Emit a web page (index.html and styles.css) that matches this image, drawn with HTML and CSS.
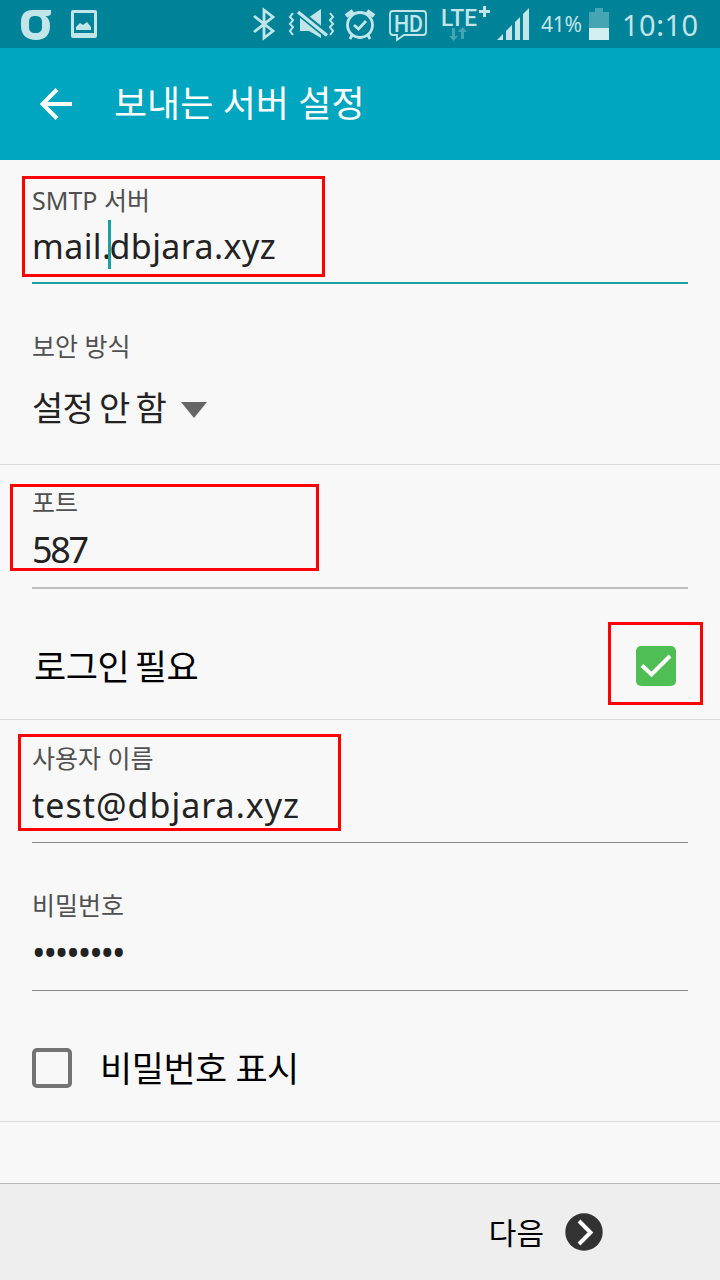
FILE: index.html
```html
<!doctype html>
<html lang="ko">
<head>
    <meta charset="UTF-8">
    <meta name="viewport" content="width=device-width, initial-scale=1.0">
    <title>보내는 서버 설정</title>
    <link rel="stylesheet" href="styles.css">
</head>
<body>
<div class="screen">
    <div class="status-bar">
        <div class="status-left">
            <svg width="32" height="32" viewBox="0 0 32 32">
                <path fill-rule="evenodd" d="M13 2H31V5Q31 8 27 8H25.500Q30 11 30 18C30 27 25 32 16 32S1 27 1 18V14C1 6 5 2 13 2ZM15 8C11 8 9 10 9 14V19C9 23 11 25 15.500 25S22 23 22 19V14C22 10 20 8 15 8Z"/>
            </svg>
            <svg class="picture" width="28" height="30" viewBox="0 0 28 30">
                <path fill-rule="evenodd" d="M3 1H25Q27 1 27 3V27Q27 29 25 29H3Q1 29 1 27V3Q1 1 3 1ZM4 4V24H24V4Z"/>
                <path d="M6 21V18L10 14L13 16L17 13L21 18V21Z"/>
            </svg>
        </div>
        <div class="status-right">
            <svg class="line" width="24" height="34" viewBox="0 0 24 34">
                <path stroke-width="2.800" d="M2 9L21 24L12 31V3L21 10L2 25"/>
            </svg>
            <svg class="mute" width="48" height="34" viewBox="0 0 48 34">
                <path class="thin" d="M5 6L2 10L5 13L2 17L5 20L2 24L5 28M42 6L45 10L42 13L45 17L42 20L45 24L42 28"/>
                <path d="M12 11H20L33 2V31L21 24H12Z"/>
                <path class="slash" d="M8 3L40 29"/>
                <path class="thin-slash" d="M10 5L39 28.500"/>
            </svg>
            <svg class="line alarm" width="32" height="34" viewBox="0 0 32 34">
                <circle cx="16" cy="18" r="12.500" stroke-width="2.800"/>
                <path stroke-width="2.800" d="M10 18L14.500 22L22 14M8 28L6 32M24 28L26 32"/>
                <path stroke-width="4.500" d="M2 9L9 4M23 4L30 9"/>
            </svg>
            <svg class="line hd" width="40" height="36" viewBox="0 0 40 36">
                <path stroke-width="1.800" d="M5 3H35Q38 3 38 6V24Q38 27 35 27H16L9 32V27H5Q2 27 2 24V6Q2 3 5 3Z"/>
                <text x="6" y="23.500" textLength="29" lengthAdjust="spacingAndGlyphs">HD</text>
            </svg>
            <svg class="lte" width="52" height="38" viewBox="0 0 52 38">
                <text x="1" y="20.500" textLength="36" lengthAdjust="spacingAndGlyphs">LTE</text>
                <path d="M43 1H46V5H50V8H46V12H43V8H39V5H43Z"/>
                <path class="faint" d="M12 23H15V31H18L13.500 36L9 31H12ZM21 34V27H18L22.500 22L27 27H24V34Z"/>
            </svg>
            <svg class="signal" width="34" height="34" viewBox="0 0 34 34">
                <path d="M1 33L7 27V33ZM10 24L16 18V33H10ZM19 15L24 10V33H19ZM27 7L33 1V33H27Z"/>
            </svg>
            <span class="percent">41%</span>
            <svg class="battery" width="22" height="34" viewBox="0 0 22 34">
                <path class="faint" d="M1 5H7V1H15V5H21V21H1Z"/>
                <path class="charge" d="M1 21H21V33H1Z"/>
            </svg>
            <span class="clock">10:10</span>
        </div>
    </div>

    <div class="app-bar">
        <svg class="back" width="34" height="34" viewBox="0 0 34 34">
            <path d="M33 17H4M18 2.500L3.500 17L18 31.500"/>
        </svg>
        <h1>보내는 서버 설정</h1>
    </div>

    <div class="section">
        <div class="field active smtp">
            <label>SMTP 서버</label>
            <div class="value address">mail.<i class="caret"></i>dbjara.xyz</div>
        </div>
        <div class="field select">
            <label>보안 방식</label>
            <div class="value">설정 안 함<span class="arrow"></span></div>
        </div>
        <div class="mark mark-smtp"></div>
    </div>

    <div class="section">
        <div class="field port">
            <label>포트</label>
            <div class="value number">587</div>
        </div>
        <div class="option">
            <span class="login">로그인 필요</span>
            <div class="checkbox checked">
                <svg width="40" height="40" viewBox="0 0 40 40">
                    <path d="M6 19.500L15.500 28.500L34 10"/>
                </svg>
            </div>
        </div>
        <div class="mark mark-port"></div>
        <div class="mark mark-login"></div>
    </div>

    <div class="section">
        <div class="field user">
            <label>사용자 이름</label>
            <div class="value address">test@dbjara.xyz</div>
        </div>
        <div class="field password">
            <label>비밀번호</label>
            <div class="value dots">••••••••</div>
        </div>
        <div class="option show-password">
            <div class="checkbox"></div>
            <span>비밀번호 표시</span>
        </div>
        <div class="mark mark-user"></div>
    </div>

    <div class="footer">
        <span>다음</span>
        <svg width="38" height="38" viewBox="0 0 38 38">
            <circle cx="19" cy="19" r="18.700"/>
            <path d="M14 8L25.500 19.500L14 31"/>
        </svg>
    </div>
</div>
</body>
</html>
```
FILE: styles.css
```css
*, *::after, *::before {
    box-sizing: border-box;
    margin: 0;
    padding: 0;
}

body {
    font-family: "Noto Sans", "Noto Sans CJK KR", sans-serif;
    background-color: #f8f8f8;
    color: #000;
}

.screen {
    width: 720px;
    height: 1280px;
    display: flex;
    flex-direction: column;
    overflow: hidden;
}

svg {
    display: block;
    flex: none;
}

/* status bar */
.status-bar {
    height: 48px;
    padding: 0 20px;
    display: flex;
    justify-content: space-between;
    background-color: #008298;
    color: #c1e5e9;
}

.status-left,
.status-right {
    display: flex;
    align-items: center;
}

.status-bar svg {
    fill: #c1e5e9;
}

.status-bar .line {
    fill: none;
    stroke: #c1e5e9;
}

.picture {
    margin-left: 18px;
}

.mute {
    margin-left: 12px;
}

.status-bar .thin {
    fill: none;
    stroke: #c1e5e9;
    stroke-width: 2;
}

.slash {
    stroke: #008298;
    stroke-width: 7;
}

.thin-slash {
    stroke: #c1e5e9;
    stroke-width: 3.5;
}

.alarm {
    margin-left: 8px;
}

.hd {
    margin-left: 12px;
    margin-top: 4px;
}

.hd text {
    font: 500 24px Roboto, sans-serif;
    fill: #c1e5e9;
    stroke: none;
}

.lte {
    margin-left: 12px;
}

.lte text {
    font: 500 23px Roboto, sans-serif;
}

.status-bar .faint {
    fill: #45a5b3;
}

.signal {
    margin-left: 4px;
}

.percent {
    width: 42px;
    margin-left: 11px;
    font-size: 21px;
    letter-spacing: -0.3px;
}

.battery {
    margin-left: 5px;
}

.status-bar .charge {
    fill: #d3eeee;
}

.clock {
    width: 78px;
    margin-left: 12px;
    font-size: 29px;
    letter-spacing: 0.5px;
}

/* app bar */
.app-bar {
    height: 112px;
    padding-left: 39px;
    display: flex;
    align-items: center;
    background-color: #00a5c0;
    color: #fff;
}

.back {
    fill: none;
    stroke: #fff;
    stroke-width: 4;
}

.app-bar h1 {
    margin-left: 41px;
    font-size: 36px;
    font-weight: 400;
    line-height: 50px;
}

/* form */
.section {
    position: relative;
    padding: 0 32px;
    border-bottom: 1px solid #dcdcdc;
}

.field {
    border-bottom: 1px solid #888;
}

.field label {
    display: block;
    font-size: 25px;
    line-height: 30px;
    padding-bottom: 2px;
    color: #505050;
}

.value {
    font-size: 36px;
    line-height: 62px;
    color: #222;
}

.smtp {
    padding: 25px 0 5px;
    border-bottom: 2px solid #1b9fa5;
}

.smtp .value {
    height: 60px;
    line-height: 58px;
    letter-spacing: 0.4px;
}

.address {
    font-size: 34px;
}

.caret {
    display: inline-block;
    width: 3px;
    height: 49px;
    margin: -14px -1px 0 -4px;
    background-color: #1b9fa5;
    vertical-align: -10px;
}

.select {
    height: 180px;
    padding-top: 47px;
    border: 0;
}

.select .value {
    font-size: 34px;
    line-height: 90px;
    letter-spacing: -0.8px;
    word-spacing: -2px;
}

.arrow {
    display: inline-block;
    margin-left: 15px;
    border: 13px solid transparent;
    border-top: 16px solid #666;
    border-bottom: 0;
    vertical-align: 3px;
}

.port {
    padding: 22px 0 6px;
    border-bottom: 2px solid #bfbfbf;
}

.number {
    letter-spacing: -2.4px;
}

.user {
    padding: 23px 0 5px;
}

.user .value {
    height: 62px;
    line-height: 60px;
    letter-spacing: 1px;
}

.password {
    padding: 47px 0 6px;
}

.dots {
    letter-spacing: -2.1px;
}

.option {
    height: 130px;
    padding-top: 24px;
    display: flex;
    align-items: center;
    justify-content: space-between;
    font-size: 35px;
    letter-spacing: -0.5px;
}

.option span {
    padding-bottom: 4px;
}

.login {
    padding-left: 2px;
    word-spacing: -3px;
}

.show-password {
    justify-content: flex-start;
    gap: 28px;
}

.checkbox {
    width: 40px;
    height: 40px;
    border: 4px solid #747474;
    border-radius: 5px;
}

.checkbox.checked {
    margin-right: 12px;
    border: 0;
    background-color: #4fbf55;
}

.checkbox path {
    fill: none;
    stroke: #fff;
    stroke-width: 4;
}

/* red highlights drawn over the form */
.mark {
    position: absolute;
    border: 3px solid #f00;
}

.mark-smtp {
    left: 22px;
    top: 16px;
    width: 303px;
    height: 101px;
}

.mark-port {
    left: 10px;
    top: 19px;
    width: 309px;
    height: 87px;
}

.mark-login {
    left: 608px;
    top: 157px;
    width: 95px;
    height: 83px;
}

.mark-user {
    left: 18px;
    top: 14px;
    width: 323px;
    height: 97px;
}

/* bottom bar */
.footer {
    height: 97px;
    margin-top: auto;
    padding-right: 117px;
    display: flex;
    align-items: center;
    justify-content: flex-end;
    gap: 21px;
    border-top: 1px solid #b9b9b9;
    background-color: #eee;
    font-size: 30px;
}

.footer span {
    padding-bottom: 3px;
}

.footer circle {
    fill: #323232;
}

.footer path {
    fill: none;
    stroke: #fff;
    stroke-width: 4;
}
```
